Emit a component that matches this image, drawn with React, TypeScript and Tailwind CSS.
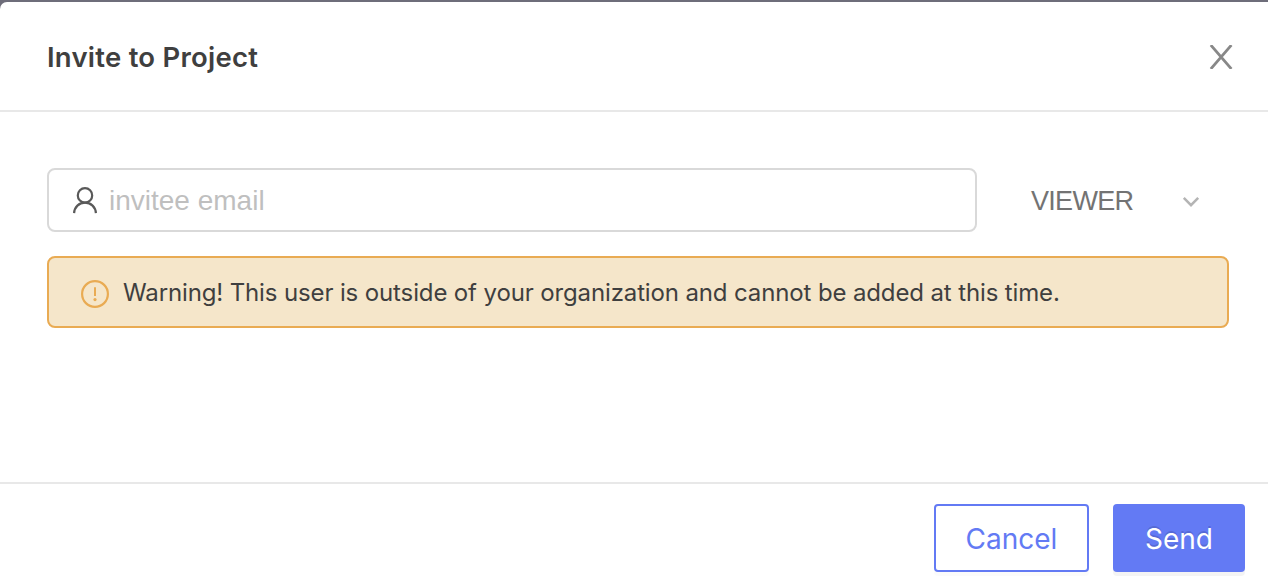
import { useState } from "react";

function CloseIcon() {
  return (
    <svg width="24" height="24" viewBox="0 0 24 24" fill="none" stroke="#888888" strokeWidth="2.7">
      <path d="M1.8 0 22.4 24M22.4 0 1.8 24" />
    </svg>
  );
}

function UserIcon() {
  return (
    <svg width="26" height="28" viewBox="0 0 26 28" fill="none" stroke="#595959" strokeWidth="2.2">
      <circle cx="13" cy="8.4" r="7.2" />
      <path d="M2.1 26.1C2.4 20.1 7 15.6 13 15.6S23.6 20.1 23.9 26.1" />
    </svg>
  );
}

function WarningIcon() {
  return (
    <svg width="28" height="28" viewBox="0 0 28 28" fill="none" stroke="#e9ab53">
      <circle cx="14" cy="14" r="12.9" strokeWidth="2.2" />
      <path d="M14 7.2V16" strokeWidth="2" />
      <circle cx="14" cy="19.6" r="1.6" fill="#e9ab53" stroke="none" />
    </svg>
  );
}

function ChevronIcon() {
  return (
    <svg width="18" height="12" viewBox="0 0 18 12" fill="none" stroke="#b4b4b4" strokeWidth="2.5">
      <path d="M1.8 1.8 9 9.2 16.2 1.8" />
    </svg>
  );
}

export default function App() {
  const [email, setEmail] = useState("");

  return (
    <div className="h-[582px] w-full overflow-hidden bg-[#6e6d7a] pt-0.5 font-['Inter',sans-serif] text-[#3f3f3f]">
      <div className="flex h-[580px] flex-col rounded-tl-[7px] bg-white">
        <header className="flex h-[110px] items-center justify-between border-b-2 border-[#e8e8e8] pt-0.5 pr-[35px] pl-[47px]">
          <h1 className="pb-px text-[27.5px] leading-9 font-semibold tracking-[0.24px] whitespace-nowrap">Invite to Project</h1>
          <button type="button" aria-label="Close">
            <CloseIcon />
          </button>
        </header>

        <main className="flex h-[370px] flex-col gap-6 pt-14 pr-[39px] pl-[47px]">
          <div className="flex h-16 items-center">
            <label className="flex h-16 w-[930px] items-center gap-[11px] rounded-lg border-2 border-[#d9d9d9] pt-0.5 pl-[23px] font-['Liberation_Sans',sans-serif]">
              <UserIcon />
              <input
                className="flex-1 bg-transparent text-[28px] leading-8 outline-none placeholder:text-[#bfbfbf]"
                placeholder="invitee email"
                value={email}
                onChange={(event) => setEmail(event.target.value)}
              />
            </label>
            <button
              type="button"
              className="ml-[54px] flex flex-1 items-center justify-between pt-0.5 pr-[29px] font-['Liberation_Sans',sans-serif] text-[27px] leading-8 tracking-[-0.7px] text-[#737373]"
            >
              VIEWER
              <span className="pt-0.5">
                <ChevronIcon />
              </span>
            </button>
          </div>

          <div role="alert" className="flex h-[72px] items-center gap-[14px] rounded-lg border-2 border-[#e9ab53] bg-[#f5e6ca] pl-8">
            <span className="pt-1">
              <WarningIcon />
            </span>
            <p className="pt-0.5 text-[24px] leading-8 tracking-[-0.13px] whitespace-nowrap">
              Warning! This user is outside of your organization and cannot be added at this time.
            </p>
          </div>
        </main>

        <footer className="flex h-[100px] items-start justify-end gap-6 border-t-2 border-[#e8e8e8] pt-5 pr-[23px]">
          <button
            type="button"
            className="h-[68px] w-[155px] rounded-[4px] border-2 border-[#637af4] pt-0.5 text-[28px] text-[#637af4] shadow-[0_4px_0_rgba(0,0,0,0.016)]"
          >
            Cancel
          </button>
          <button
            type="button"
            className="h-[68px] w-[132px] rounded-[4px] bg-[#637af4] pt-0.5 text-[28px] text-white shadow-[0_4px_0_rgba(0,0,0,0.045)] [text-shadow:0_-2px_0_rgba(0,0,0,0.12)]"
          >
            Send
          </button>
        </footer>
      </div>
    </div>
  );
}
